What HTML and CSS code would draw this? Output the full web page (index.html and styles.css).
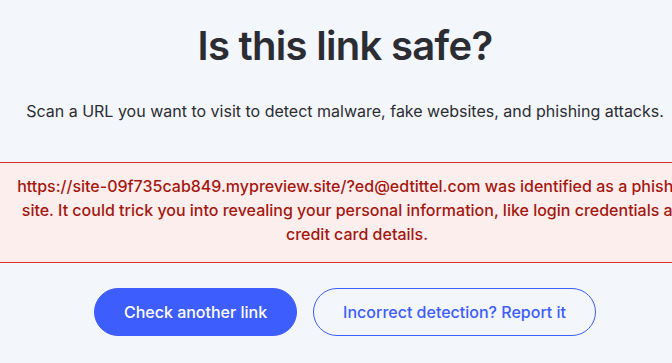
FILE: index.html
```html
<!DOCTYPE html>
<html lang="en">

<head>
    <meta charset="UTF-8">
    <meta name="viewport" content="width=device-width, initial-scale=1.0">
    <title>Is this link safe?</title>
    <link rel="stylesheet" href="styles.css">
</head>

<body>
    <div class="viewport">
        <main class="page">
            <h1 class="title">Is this link safe?</h1>
            <p class="lead">Scan a URL you want to visit to detect malware, fake websites, and phishing attacks.</p>

            <div class="alert">
                <p>https://site-09f735cab849.mypreview.site/?ed@edtittel.com was identified as a phishing site. It could trick you into revealing your personal information, like login credentials and credit card details.</p>
            </div>

            <div class="actions">
                <button class="btn btn-primary">Check another link</button>
                <button class="btn btn-outline">Incorrect detection? Report it</button>
            </div>
        </main>
    </div>
</body>

</html>
```

FILE: styles.css
```css
* {
    box-sizing: border-box;
}

html,
body {
    margin: 0;
    padding: 0;
}

body {
    font-family: Inter, "Noto Sans", sans-serif;
    background-color: #f3f6fb;
    color: #2b2d33;
}

.viewport {
    width: 100%;
    overflow: hidden;
}

.page {
    width: 690px;
    padding-top: 22px;
}

.title {
    margin: 0;
    font-size: 40px;
    line-height: 48px;
    font-weight: 600;
    text-align: center;
    letter-spacing: -0.7px;
}

.lead {
    margin: 29px 0 0;
    font-size: 16px;
    line-height: 24px;
    text-align: center;
}

.alert {
    width: 714px;
    margin-top: 39px;
    padding: 11px 12px 16px;
    background-color: #fdeeee;
    border-top: 1px solid #d9302a;
    border-bottom: 1px solid #d9302a;
    color: #a3170f;
    text-align: center;
}

.alert p {
    margin: 0;
    font-size: 16px;
    line-height: 24px;
    font-weight: 500;
}

.actions {
    display: flex;
    justify-content: center;
    gap: 16px;
    margin-top: 25px;
}

.btn {
    height: 48px;
    padding: 0 29px;
    border-radius: 24px;
    font-family: inherit;
    font-size: 16px;
    font-weight: 500;
    cursor: pointer;
}

.btn-primary {
    background-color: #3d5dfd;
    border: 1px solid #3d5dfd;
    color: #fff;
}

.btn-outline {
    background-color: transparent;
    border: 1px solid #3d5dfd;
    color: #3d5dfd;
}
```
